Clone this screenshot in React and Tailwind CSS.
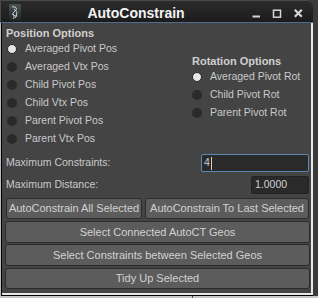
import React from "react";

const Radio = ({ checked }) =>
  checked ? (
    <span className="block w-[10px] h-[10px] rounded-full bg-[#e6e6e6] border-[1.5px] border-[#262626] shrink-0" />
  ) : (
    <span className="block w-[10px] h-[10px] rounded-full bg-[#2a2a2a] shrink-0" />
  );

const RadioRow = ({ label, checked }) => (
  <div className="h-[18px] flex items-center gap-[8px]">
    <Radio checked={checked} />
    <span className="text-[10.5px] text-[#c9c9c9] whitespace-nowrap">{label}</span>
  </div>
);

const Btn = ({ children, className = "" }) => (
  <div
    className={
      "flex items-center justify-center bg-[#5c5c5c] border border-[#2c2c2c] rounded-[3px] text-[11px] text-[#d2d2d2] whitespace-nowrap " +
      className
    }
  >
    {children}
  </div>
);

export default function App() {
  return (
    <div className="w-[318px] h-[298px] overflow-hidden bg-[#3a3a3a] flex flex-col font-['Liberation_Sans',Arial,sans-serif]">
      <div className="flex h-[296px]">
        <div className="w-[313px] flex flex-col">
          {/* title bar */}
          <div className="h-[22px] flex items-start bg-gradient-to-b from-[#2c2c2c] to-[#1b1b1b] rounded-tr-[6px] border-t border-l border-[#4a4a4a]">
            <div className="w-[21px] pl-[8px] pt-[3px] shrink-0">
              <svg width="12" height="17" viewBox="0 0 12 17">
                <defs>
                  <linearGradient id="ig" x1="0" y1="0" x2="0" y2="1">
                    <stop offset="0" stopColor="#4a5458" />
                    <stop offset="1" stopColor="#1e2426" />
                  </linearGradient>
                </defs>
                <rect x="0" y="0" width="12" height="17" rx="1" fill="url(#ig)" />
                <path d="M3 3 C7 2 9 5 6 7 C3 9 4 12 8 12 M5 5 C8 7 9 10 6 14 M3 10 C5 11 6 13 4 15" stroke="#e8e8e8" strokeWidth="0.9" fill="none" />
              </svg>
            </div>
            <div className="flex-1 flex justify-center pt-[4px]">
              <span className="text-[14px] leading-[17px] font-bold text-[#f2f2f2]">AutoConstrain</span>
            </div>
            <svg width="63" height="21" viewBox="0 0 63 21" className="shrink-0">
              <rect x="2.5" y="14.5" width="7.5" height="2" fill="#d6d6d6" />
              <rect x="23.5" y="9.2" width="7" height="7" fill="none" stroke="#d6d6d6" strokeWidth="1.5" />
              <path d="M44.8 8.8 L51.8 15.8 M51.8 8.8 L44.8 15.8" stroke="#d6d6d6" strokeWidth="2.2" />
            </svg>
          </div>
          <div className="h-px bg-[#4e6d8f]" />
          {/* body frame */}
          <div className="flex-1 flex flex-col bg-[#bcbcbc] pl-px">
            <div className="flex-1 flex flex-col border-l border-b border-black">
              <div className="flex-1 flex flex-col border-r-2 border-b-2 border-[#e8e8e8]">
                <div className="flex-1 flex flex-col bg-[#444444] pl-[3px] pr-[1px] pt-[4px]">
                  {/* options */}
                  <div className="flex">
                    <div className="w-[186px] flex flex-col">
                      <div className="h-[13px] leading-[13px] pl-[1px] text-[11px] font-bold text-[#d0d0d0]">Position Options</div>
                      <div className="pl-[2px] flex flex-col">
                        <RadioRow label="Averaged Pivot Pos" checked />
                        <RadioRow label="Averaged Vtx Pos" />
                        <RadioRow label="Child Pivot Pos" />
                        <RadioRow label="Child Vtx Pos" />
                        <RadioRow label="Parent Pivot Pos" />
                        <RadioRow label="Parent Vtx Pos" />
                      </div>
                    </div>
                    <div className="flex-1 flex flex-col pt-[28px]">
                      <div className="h-[13px] leading-[13px] pl-[1px] text-[11px] font-bold text-[#d0d0d0]">Rotation Options</div>
                      <div className="pl-[1px] flex flex-col">
                        <RadioRow label="Averaged Pivot Rot" checked />
                        <RadioRow label="Child Pivot Rot" />
                        <RadioRow label="Parent Pivot Rot" />
                      </div>
                    </div>
                  </div>
                  {/* fields */}
                  <div className="mt-[6px] h-[18px] flex items-center justify-between pl-[1px] pr-[1px]">
                    <span className="text-[10.5px] text-[#c9c9c9]">Maximum Constraints:</span>
                    <div className="w-[108px] h-[18px] bg-[#2a2a2a] border border-[#5d87b3] rounded-[2px] flex items-center pl-[2px]">
                      <span className="text-[10.5px] text-[#d0d0d0]">4</span>
                      <span className="ml-[1px] w-px h-[13px] bg-[#d0d0d0]" />
                    </div>
                  </div>
                  <div className="mt-[4px] h-[18px] flex items-center justify-between pl-[1px] pr-[1px]">
                    <span className="text-[10.5px] text-[#c9c9c9]">Maximum Distance:</span>
                    <div className="w-[58px] h-[18px] bg-[#2a2a2a] border border-[#232323] rounded-[2px] flex items-center pl-[3px]">
                      <span className="text-[10.5px] text-[#d0d0d0]">1.0000</span>
                    </div>
                  </div>
                  {/* buttons */}
                  <div className="mt-[4px] h-[21px] flex gap-[3px] pl-[1px] pr-[1px]">
                    <Btn className="w-[136px] h-[21px]">AutoConstrain All Selected</Btn>
                    <Btn className="flex-1 h-[21px]">AutoConstrain To Last Selected</Btn>
                  </div>
                  <Btn className="mt-[2px] h-[22px]">Select Connected AutoCT Geos</Btn>
                  <Btn className="mt-[1px] h-[22px]">Select Constraints between Selected Geos</Btn>
                  <Btn className="mt-[2px] h-[21px]">Tidy Up Selected</Btn>
                </div>
              </div>
            </div>
          </div>
        </div>
        <div className="flex-1 bg-[#3a3a3a]" />
      </div>
      <div className="h-[2px] bg-[#c8c8c8] flex">
        <div className="ml-[192px] w-px bg-[#2f6b2f]" />
      </div>
    </div>
  );
}
